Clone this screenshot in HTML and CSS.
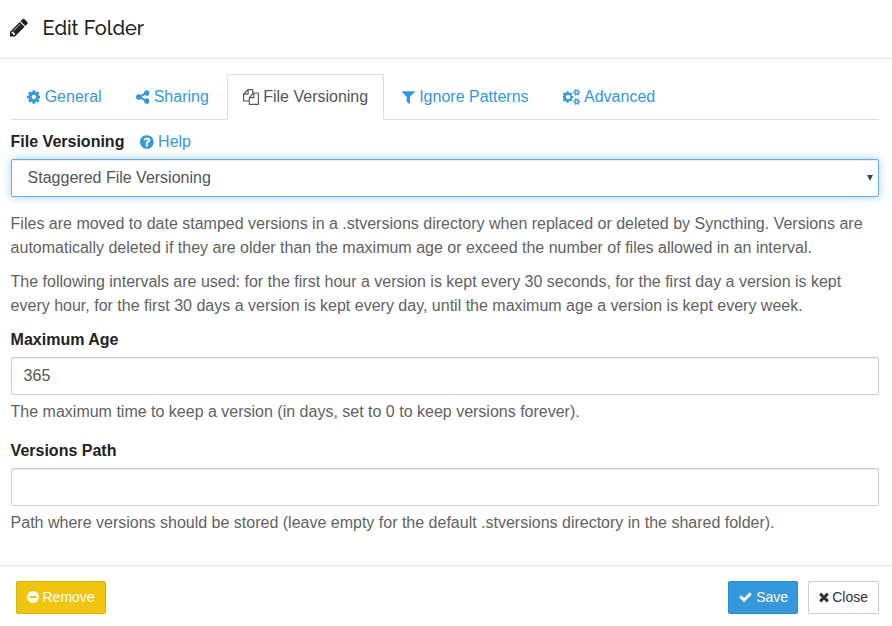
FILE: index.html
```html
<!DOCTYPE html>
<html lang="en">
<head>
<meta charset="utf-8">
<title>Edit Folder</title>
<link rel="stylesheet" href="styles.css">
</head>
<body>
<div class="modal">
  <header class="modal-header">
    <svg class="icon icon-title" viewBox="128 0 1536 1792"><path d="M491 1536l91-91-235-235-91 91v107h128v128h107zm523-928q0-22-22-22-10 0-17 7l-542 542q-7 7-7 17 0 22 22 22 10 0 17-7l542-542q7-7 7-17zm-54-192l416 416-832 832h-416v-416zm683 96q0 53-37 90l-166 166-416-416 166-165q36-38 90-38 53 0 91 38l235 234q37 39 37 91z"/></svg>
    <h4 class="modal-title">Edit Folder</h4>
  </header>
  <main class="modal-body">
    <nav class="tabs">
      <a class="tab"><svg class="icon w14" viewBox="128 0 1536 1792"><path d="M1152 896q0-106-75-181t-181-75-181 75-75 181 75 181 181 75 181-75 75-181zm512-109v222q0 12-8 23t-20 13l-185 28q-19 54-39 91 35 50 107 138 10 12 10 25t-9 23q-27 37-99 108t-94 71q-12 0-26-9l-138-108q-44 23-91 38-16 136-29 186-7 28-36 28h-222q-14 0-24.500-8.500t-11.500-21.500l-28-184q-49-16-90-37l-141 107q-10 9-25 9-14 0-25-11-126-114-165-168-7-10-7-23 0-12 8-23 15-21 51-66.500t54-70.500q-27-50-41-99l-183-27q-13-2-21-12.500t-8-23.500v-222q0-12 8-23t19-13l186-28q14-46 39-92-40-57-107-138-10-12-10-24 0-10 9-23 26-36 98.500-107.500t94.500-71.500q13 0 26 10l138 107q44-23 91-38 16-136 29-186 7-28 36-28h222q14 0 24.500 8.500t11.500 21.500l28 184q49 16 90 37l142-107q9-9 24-9 13 0 25 10 129 119 165 170 7 8 7 22 0 12-8 23-15 21-51 66.500t-54 70.500q26 50 41 98l183 28q13 2 21 12.500t8 23.500z"/></svg>General</a>
      <a class="tab"><svg class="icon w14" viewBox="128 0 1536 1792"><path d="M1344 1024q133 0 226.500 93.500t93.500 226.500-93.500 226.500-226.500 93.500-226.500-93.500-93.500-226.500q0-12 2-34l-360-180q-92 86-218 86-133 0-226.500-93.500t-93.500-226.500 93.500-226.500 226.500-93.500q126 0 218 86l360-180q-2-22-2-34 0-133 93.500-226.500t226.500-93.500 226.500 93.500 93.500 226.500-93.500 226.500-226.500 93.500q-126 0-218-86l-360 180q2 22 2 34t-2 34l360 180q92-86 218-86z"/></svg>Sharing</a>
      <a class="tab active"><svg class="icon w16" viewBox="0 0 1792 1792"><path d="M1696 384q40 0 68 28t28 68v1216q0 40-28 68t-68 28h-960q-40 0-68-28t-28-68v-288h-544q-40 0-68-28t-28-68v-672q0-40 20-88t48-76l408-408q28-28 76-48t88-20h416q40 0 68 28t28 68v328q68-40 128-40h416zm-544 213l-299 299h299v-299zm-640-384l-299 299h299v-299zm196 647l316-316v-416h-384v416q0 40-28 68t-68 28h-416v640h512v-256q0-40 20-88t48-76zm956 804v-1152h-384v416q0 40-28 68t-68 28h-416v640h896z"/></svg>File Versioning</a>
      <a class="tab"><svg class="icon w13" viewBox="192 0 1408 1792"><path d="M1595 295q17 41-14 70l-493 493v742q0 42-39 59-13 5-25 5-27 0-45-19l-256-256q-19-19-19-45v-486l-493-493q-31-29-14-70 17-39 59-39h1280q42 0 59 39z"/></svg>Ignore Patterns</a>
      <a class="tab"><svg class="icon w17" viewBox="0 0 1920 1792"><path d="M832 896q0-106-75-181t-181-75-181 75-75 181 75 181 181 75 181-75 75-181zm320-91v185q0 10-7 19.500t-16 10.500l-155 24q-11 35-32 76 34 48 90 115 7 11 7 20 0 12-7 19-23 30-82.500 89.500t-78.500 59.500q-11 0-21-7l-115-90q-37 19-77 31-11 108-23 155-7 24-30 24h-186q-11 0-20-7.500t-10-17.500l-23-153q-34-10-75-31l-118 89q-7 7-20 7-11 0-21-8-144-133-144-160 0-9 7-19 10-14 41-53t47-61q-23-44-35-82l-152-24q-10-1-17-9.500t-7-19.500v-185q0-10 7-19.500t16-10.500l155-24q11-35 32-76-34-48-90-115-7-11-7-20 0-12 7-20 22-30 82-89t79-59q11 0 21 7l115 90q34-18 77-32 11-108 23-154 7-24 30-24h186q11 0 20 7.500t10 17.500l23 153q34 10 75 31l118-89q8-7 20-7 11 0 21 8 144 133 144 160 0 8-7 19-12 16-42 54t-45 60q23 48 34 82l152 23q10 2 17 10.500t7 19.500z"/><path id="small-gear" fill-rule="evenodd" d="M1920 1338v140q0 16-149 31-12 27-30 52 51 113 51 138 0 4-4 7-122 71-124 71-8 0-46-47t-52-68q-20 2-30 2t-30-2q-14 21-52 68t-46 47q-2 0-124-71-4-3-4-7 0-25 51-138-18-25-30-52-149-15-149-31v-140q0-16 149-31 13-29 30-52-51-113-51-138 0-4 4-7 4-2 35-20t59-34 30-16q8 0 46 46.500t52 67.500q20-2 30-2t30 2q51-71 92-112l6-2q4 0 124 70 4 3 4 7 0 25-51 138 17 23 30 52 149 15 149 31zM1664 1408a128 128 0 1 0-256 0 128 128 0 1 0 256 0z"/><use href="#small-gear" y="-1024"/></svg>Advanced</a>
    </nav>
    <section class="group">
      <div class="label-row"><label class="label" for="versioning">File Versioning</label><a class="help-link"><svg class="icon w14" viewBox="128 0 1536 1792"><path d="M1024 1376v-192q0-14-9-23t-23-9h-192q-14 0-23 9t-9 23v192q0 14 9 23t23 9h192q14 0 23-9t9-23zm256-672q0-88-55.500-163t-138.500-116-170-41q-243 0-371 213-15 24 8 42l132 100q7 6 19 6 16 0 25-12 53-68 86-92 34-24 86-24 48 0 85.500 26t37.500 59q0 38-20 61t-68 45q-63 28-115.500 86.500t-52.500 125.500v36q0 14 9 23t23 9h192q14 0 23-9t9-23q0-19 21.500-49.500t54.500-49.500q32-18 49-28.500t46-35 44.500-48 28-60.500 12.500-81zm384 192q0 209-103 385.500t-279.500 279.500-385.500 103-385.500-103-279.500-279.500-103-385.500 103-385.500 279.500-279.500 385.500-103 385.500 103 279.500 279.500 103 385.500z"/></svg>Help</a></div>
      <div class="control select" id="versioning" tabindex="0"><span>Staggered File Versioning</span><svg class="caret" viewBox="0 0 6 6"><path d="M0 0h6L3 6z"/></svg></div>
      <p class="help first">Files are moved to date stamped versions in a .stversions directory when replaced or deleted by Syncthing. Versions are automatically deleted if they are older than the maximum age or exceed the number of files allowed in an interval.</p>
      <p class="help">The following intervals are used: for the first hour a version is kept every 30 seconds, for the first day a version is kept every hour, for the first 30 days a version is kept every day, until the maximum age a version is kept every week.</p>
    </section>
    <section class="group">
      <div class="label-row"><label class="label" for="age">Maximum Age</label></div>
      <input class="control" id="age" type="text" value="365">
      <p class="help note">The maximum time to keep a version (in days, set to 0 to keep versions forever).</p>
    </section>
    <section class="group path-group">
      <div class="label-row"><label class="label" for="path">Versions Path</label></div>
      <input class="control" id="path" type="text">
      <p class="help note">Path where versions should be stored (leave empty for the default .stversions directory in the shared folder).</p>
    </section>
  </main>
  <footer class="modal-footer">
    <button class="btn warning"><svg class="icon b12" viewBox="128 0 1536 1792"><path fill-rule="evenodd" d="M128 896a768 768 0 1 0 1536 0 768 768 0 1 0-1536 0zM512 768h768q64 0 64 64v128q0 64-64 64H512q-64 0-64-64V832q0-64 64-64z"/></svg>Remove</button>
    <div class="actions">
      <button class="btn primary"><svg class="icon b13" viewBox="64 0 1664 1792"><path d="M1671 566q0 40-28 68l-724 724-136 136q-28 28-68 28t-68-28l-136-136-362-362q-28-28-28-68t28-68l136-136q28-28 68-28t68 28l294 295 656-657q28-28 68-28t68 28l136 136q28 28 28 68z"/></svg>Save</button>
      <button class="btn close"><svg class="icon b10" viewBox="302 0 1188 1792"><path d="M1490 1322q0 40-28 68l-136 136q-28 28-68 28t-68-28l-294-294-294 294q-28 28-68 28t-68-28l-136-136q-28-28-28-68t28-68l294-294-294-294q-28-28-28-68t28-68l136-136q28-28 68-28t68 28l294 294 294-294q28-28 68-28t68 28l136 136q28 28 28 68t-28 68l-294 294 294 294q28 28 28 68z"/></svg>Close</button>
    </div>
  </footer>
</div>
</body>
</html>
```
FILE: styles.css
```css
* { box-sizing: border-box; }
body {
  margin: 0;
  background: #fff;
  color: #222;
  font: 16px/24px "Liberation Sans", Arial, sans-serif;
  overflow: hidden;
}
.modal { display: flex; flex-direction: column; }
.icon { height: 16px; margin-bottom: 1px; fill: currentColor; flex: none; }
.w13 { width: 12.6px; }
.w14 { width: 13.7px; }
.w16 { width: 16px; }
.w17 { width: 17.1px; }
.modal-header {
  display: flex;
  align-items: center;
  height: 59px;
  padding: 0 10px 3px;
  border-bottom: 1px solid #e5e5e5;
}
.icon-title { width: 18px; height: 21px; margin: 0 14.5px 0 0; }
.modal-title {
  margin: 0;
  font: 500 20px/24px Raleway, Lato, sans-serif;
}
.modal-body { padding: 15px 13px 0 10.6px; }
.tabs {
  display: flex;
  gap: 2px;
  height: 46px;
  border-bottom: 1px solid #ddd;
}
.tab {
  display: flex;
  align-items: center;
  gap: 4.4px;
  height: 46px;
  padding: 0 15px;
  border: 1px solid transparent;
  border-radius: 2px 2px 0 0;
  color: #3498db;
  white-space: nowrap;
}
.tab.active {
  border-color: #ddd;
  border-bottom-color: #fff;
  background: #fff;
  color: #555;
}
.label-row { display: flex; height: 29px; }
.label { font-weight: 700; }
.group { padding-top: 10px; }
.path-group { padding-top: 15px; }
.help-link {
  display: flex;
  align-items: center;
  gap: 4.4px;
  height: 24px;
  margin-left: 15.6px;
  color: #3498db;
}
.control {
  display: block;
  width: 100%;
  height: 38px;
  padding: 6px 12px;
  border: 1px solid #ccc;
  border-radius: 2px;
  background: #fff;
  box-shadow: inset 0 1px 1px rgba(0, 0, 0, 0.075);
  color: #555;
  font: inherit;
  outline: none;
}
.select {
  display: flex;
  align-items: center;
  justify-content: space-between;
  padding: 0 5px 0 16px;
  border-color: #66afe9;
  box-shadow: inset 0 1px 1px rgba(0, 0, 0, 0.075), 0 0 8px rgba(102, 175, 233, 0.6);
}
.caret { width: 6px; height: 6px; fill: #444; }
.help { margin: 10px 0 0; color: #626262; }
.help.first { margin-top: 15px; }
.help.note { margin-top: 5px; }
.modal-footer {
  display: flex;
  justify-content: space-between;
  margin-top: 30px;
  padding: 15px 13px 12px 16px;
  border-top: 1px solid #e5e5e5;
}
.actions { display: flex; gap: 10px; }
.btn {
  display: flex;
  align-items: center;
  gap: 4px;
  height: 33px;
  padding: 0 10px;
  border: 1px solid #ccc;
  border-radius: 2px;
  background: #fff;
  color: #333;
  font: 14px/21px "Liberation Sans", Arial, sans-serif;
}
.btn .icon { height: 14px; }
.b10 { width: 10px; }
.b12 { width: 12px; }
.b13 { width: 13px; }
.warning { padding-left: 9.5px; background: #f1c40f; border-color: #deb30b; color: #fff; }
.primary { padding-right: 9.3px; background: #3498db; border-color: #258cd1; color: #fff; }
.close { gap: 3.5px; padding-left: 9.3px; }
```
